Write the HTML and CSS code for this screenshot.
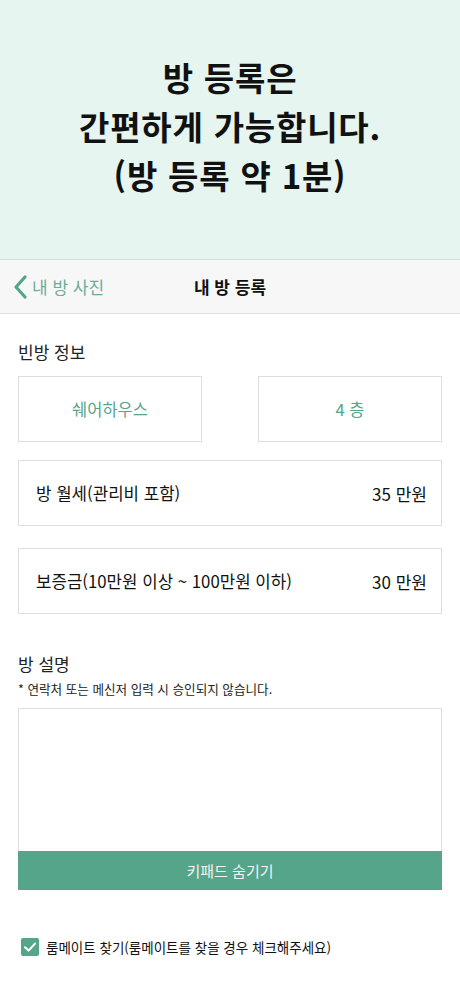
FILE: index.html
```html
<!DOCTYPE html>
<html lang="ko">
<head>
<meta charset="utf-8">
<title>내 방 등록</title>
<link rel="stylesheet" href="styles.css">
</head>
<body>
<header class="hero">
  <h1 class="hero-title">방 등록은<br>간편하게 가능합니다.<br>(방 등록 약 1분)</h1>
</header>
<nav class="navbar">
  <a class="back" href="#">
    <svg class="back-icon" width="16" height="24" viewBox="0 0 16 24"><path d="M12 2 L3 12 L12 22" fill="none" stroke="#55a58a" stroke-width="3.2" stroke-linecap="round" stroke-linejoin="round"/></svg>
    <span>내 방 사진</span>
  </a>
  <div class="nav-title">내 방 등록</div>
  <div></div>
</nav>
<main class="content">
  <h2 class="section-title first">빈방 정보</h2>
  <div class="pair">
    <div class="box choice">쉐어하우스</div>
    <div class="box choice">4 층</div>
  </div>
  <div class="box row row-rent"><span>방 월세(관리비 포함)</span><span class="val">35 만원</span></div>
  <div class="box row row-deposit"><span>보증금(10만원 이상 ~ 100만원 이하)</span><span class="val">30 만원</span></div>
  <h2 class="section-title desc">방 설명</h2>
  <p class="note">* 연락처 또는 메신저 입력 시 승인되지 않습니다.</p>
  <div class="textarea"></div>
  <button class="hide-btn">키패드 숨기기</button>
  <label class="check">
    <span class="checkbox"><svg width="18" height="18" viewBox="0 0 18 18"><path d="M4 9.2 L7.6 12.6 L14 5.6" fill="none" stroke="#fff" stroke-width="2" stroke-linecap="round" stroke-linejoin="round"/></svg></span>
    <span class="check-label">룸메이트 찾기(룸메이트를 찾을 경우 체크해주세요)</span>
  </label>
</main>
</body>
</html>
```

FILE: styles.css
```css
* { box-sizing: border-box; }
html, body { margin: 0; padding: 0; }
body {
  width: 460px;
  height: 996px;
  overflow: hidden;
  background: #fff;
  font-family: "Noto Sans CJK KR", "Noto Sans", sans-serif;
  color: #111;
}
.hero {
  height: 260px;
  background: #e7f5f1;
  border-bottom: 1px solid #d6dcda;
  display: flex;
  align-items: center;
  justify-content: center;
  padding-bottom: 6px;
}
.hero-title {
  margin: 0;
  font-size: 33px;
  line-height: 49px;
  font-weight: 700;
  text-align: center;
  color: #111;
  letter-spacing: 0.8px;
}
.navbar {
  height: 54px;
  background: #f7f7f7;
  border-bottom: 1px solid #e0e0e0;
  display: grid;
  grid-template-columns: 1fr auto 1fr;
  align-items: center;
}
.back {
  display: flex;
  align-items: center;
  gap: 3px;
  padding-left: 13px;
  color: #6aae97;
  text-decoration: none;
  font-size: 17px;
}
.back-icon { display: block; }
.nav-title {
  font-size: 17px;
  font-weight: 700;
  color: #111;
}
.content { padding: 0 18px; }
.section-title {
  margin: 0;
  font-size: 17px;
  font-weight: 400;
  color: #222;
  line-height: 24px;
}
.section-title.first { padding-top: 26px; }
.pair {
  display: grid;
  grid-template-columns: 184px 184px;
  justify-content: space-between;
  margin-top: 12px;
}
.box {
  border: 1px solid #dedede;
  background: #fff;
  height: 66px;
}
.choice {
  display: flex;
  align-items: center;
  justify-content: center;
  color: #55a58a;
  font-size: 16.5px;
}
.row {
  display: flex;
  align-items: center;
  justify-content: space-between;
  padding: 0 14px 0 17px;
  font-size: 16.8px;
  color: #111;
}
.row .val { font-size: 17px; }
.row-rent { margin-top: 18px; }
.row-deposit { margin-top: 22px; }
.section-title.desc { margin-top: 38px; font-size: 17px; }
.note {
  margin: 4px 0 0;
  font-size: 12.6px;
  line-height: 18px;
  color: #222;
}
.textarea {
  margin-top: 10px;
  height: 143px;
  border: 1px solid #dedede;
  border-bottom: none;
}
.hide-btn {
  display: block;
  width: 100%;
  height: 39px;
  border: none;
  background: #55a58a;
  color: #f3f3f3;
  font-family: inherit;
  font-size: 15px;
  padding: 0;
}
.check {
  display: flex;
  align-items: center;
  gap: 7px;
  margin-top: 47px;
  padding-left: 3px;
}
.checkbox {
  width: 18px;
  height: 18px;
  border-radius: 2px;
  background: #55a58a;
  display: block;
}
.checkbox svg { display: block; }
.check-label {
  font-size: 13.5px;
  color: #111;
}
```
